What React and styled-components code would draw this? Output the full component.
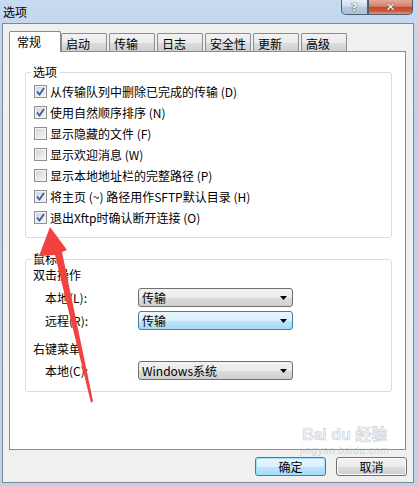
import React from 'react';
import styled, { createGlobalStyle } from 'styled-components';

const cjk = `"Noto Sans CJK SC", "Liberation Sans", sans-serif`;

const GlobalStyle = createGlobalStyle`
  html, body {
    margin: 0;
    padding: 0;
  }
  body {
    background: #b9d1ea;
    font-family: ${cjk};
    font-size: 12px;
    color: #000;
  }
`;

const Window = styled.div`
  position: relative;
  width: 418px;
  height: 486px;
  overflow: hidden;
  display: flex;
  flex-direction: column;
  box-sizing: border-box;
  background: linear-gradient(180deg, #c6daf0 0%, #b9d1ea 25%, #bcd3ec 100%);
`;

const TitleBar = styled.div`
  flex: none;
  height: 23px;
  display: flex;
  justify-content: space-between;
  align-items: flex-start;
  padding: 0 5px 0 3px;
`;

const Title = styled.div`
  margin-top: 4px;
  font-size: 12px;
  line-height: 16px;
`;

const Caption = styled.div`
  display: flex;
`;

const CaptionButton = styled.div`
  width: ${({ $w }) => $w}px;
  height: 15px;
  box-sizing: border-box;
  border: 1px solid #4f5d70;
  border-top: none;
  border-radius: ${({ $close }) => ($close ? '0 0 5px 0' : '0 0 0 5px')};
  display: flex;
  align-items: center;
  justify-content: center;
  background: ${({ $close }) => ($close
    ? 'linear-gradient(180deg, #e9a899 0%, #d9806b 45%, #c24a2e 52%, #cc5b3f 80%, #e3987c 100%)'
    : 'linear-gradient(180deg, #e6eef8 0%, #cfdcec 45%, #b5c8df 52%, #adc3dc 100%)')};
  color: #fff;
  font: bold ${({ $close }) => ($close ? 12 : 11)}px "DejaVu Sans", sans-serif;
  line-height: 13px;
  text-shadow: 0 0 1px #333, 0 0 1px #333;
`;

const Client = styled.div`
  flex: 1;
  display: flex;
  flex-direction: column;
  margin: 0 4px 3px 2px;
  padding: 7px 7px 0 6px;
  background: #f0f0f0;
  border: 1px solid #7f8896;
`;

const TabRow = styled.div`
  display: flex;
  align-items: flex-end;
  gap: 2px;
  height: 20px;
  position: relative;
  z-index: 1;
`;

const Tab = styled.div`
  box-sizing: border-box;
  width: ${({ $active }) => ($active ? 52 : 46)}px;
  height: ${({ $active }) => ($active ? 21 : 18)}px;
  margin-bottom: ${({ $active }) => ($active ? -1 : 0)}px;
  margin-right: ${({ $active }) => ($active ? -2 : 0)}px;
  padding: ${({ $active }) => ($active ? '1px 0 0 7px' : '2px 0 0 4px')};
  line-height: ${({ $active }) => ($active ? 18 : 15)}px;
  border: 1px solid #898c95;
  border-bottom: none;
  border-radius: 2px 2px 0 0;
  background: ${({ $active }) => ($active
    ? '#fff'
    : 'linear-gradient(180deg, #f2f2f2 0%, #ebebeb 50%, #dddddd 51%, #cfcfcf 100%)')};
  white-space: nowrap;
`;

const Panel = styled.div`
  flex: none;
  box-sizing: border-box;
  height: 399px;
  background: #fff;
  border: 1px solid #898c95;
  padding: 0 13px 0 15px;
`;

const Group = styled.fieldset`
  margin: ${({ $top }) => $top}px 0 0;
  padding: 0 0 ${({ $bottom }) => $bottom}px ${({ $left }) => $left}px;
  border: 1px solid #d5dfe5;
  border-radius: 3px;
  min-width: 0;
`;

const Legend = styled.legend`
  margin-left: ${({ $shift }) => $shift}px;
  padding: 0 2px;
  line-height: 14px;
  font-size: 12px;
`;

const Rows = styled.div`
  padding-top: 2px;
`;

const CheckRow = styled.label`
  display: flex;
  align-items: center;
  gap: 3px;
  height: 21px;
  line-height: 16px;
  white-space: nowrap;
`;

const Box = styled.span`
  flex: none;
  width: 13px;
  height: 13px;
  box-sizing: border-box;
  border: 1px solid #8e8f8f;
  background: linear-gradient(135deg, #cdd1d7 0%, #e4e6e9 50%, #f7f7f7 100%);
  box-shadow: inset 0 0 0 1px #f4f4f4;
  display: flex;
  align-items: center;
  justify-content: center;
`;

const Heading = styled.div`
  margin-top: ${({ $top }) => $top}px;
  line-height: 16px;
`;

const FieldRow = styled.div`
  display: flex;
  align-items: center;
  margin-top: ${({ $top }) => $top}px;
  height: 19px;
`;

const FieldLabel = styled.span`
  box-sizing: border-box;
  width: 105px;
  padding-left: 12px;
  line-height: 16px;
`;

const Combo = styled.div`
  box-sizing: border-box;
  width: 155px;
  height: 19px;
  display: flex;
  align-items: center;
  justify-content: space-between;
  padding: 0 5px 0 3px;
  border: 1px solid ${({ $focus }) => ($focus ? '#3c7fb1' : '#707070')};
  border-radius: 3px;
  background: ${({ $focus }) => ($focus
    ? 'linear-gradient(180deg, #eaf6fd 0%, #d9f0fc 50%, #bee6fd 51%, #a7d9f5 100%)'
    : 'linear-gradient(180deg, #f2f2f2 0%, #ebebeb 50%, #dddddd 51%, #cfcfcf 100%)')};
  line-height: 16px;
`;

const Footer = styled.div`
  display: flex;
  justify-content: flex-end;
  gap: 10px;
  margin: 7px -1px 0 0;
`;

const Button = styled.button`
  box-sizing: border-box;
  width: 71px;
  height: 19px;
  padding: 0;
  font-family: ${cjk};
  font-size: 12px;
  line-height: 16px;
  color: #000;
  border: 1px solid ${({ $primary }) => ($primary ? '#3c7fb1' : '#707070')};
  border-radius: 3px;
  box-shadow: inset 0 0 0 1px ${({ $primary }) => ($primary ? '#9fe0fb' : '#fcfcfc')};
  background: ${({ $primary }) => ($primary
    ? 'linear-gradient(180deg, #eaf6fd 0%, #d9f0fc 50%, #bee6fd 51%, #a7d9f5 100%)'
    : 'linear-gradient(180deg, #f2f2f2 0%, #ebebeb 50%, #dddddd 51%, #cfcfcf 100%)')};
`;

const Overlay = styled.svg`
  position: absolute;
  left: 0;
  top: 0;
  pointer-events: none;
`;

const Watermark = styled.div`
  position: absolute;
  left: 300px;
  top: 425px;
  display: flex;
  flex-direction: column;
  align-items: center;
  color: rgba(236, 238, 242, 0.7);
  pointer-events: none;
`;

const MarkTitle = styled.div`
  font: bold 16px "Liberation Sans", ${cjk};
  line-height: 20px;
  -webkit-text-stroke: 0.7px rgba(170, 175, 185, 0.5);
  white-space: nowrap;
`;

const MarkUrl = styled.div`
  font: 10px "Liberation Sans", sans-serif;
  line-height: 11px;
  letter-spacing: 0.5px;
  color: rgba(180, 186, 196, 0.55);
`;

const Check = () => (
  <svg width="9" height="9" viewBox="0 0 9 9">
    <path d="M1 4.5 L3.5 7.5 L8 1" fill="none" stroke="#3c5a9e" strokeWidth="1.8" />
  </svg>
);

const Arrow = () => (
  <svg width="7" height="4" viewBox="0 0 7 4">
    <path d="M0 0 H7 L3.5 4 Z" fill="#000" />
  </svg>
);

const tabs = ['常规', '启动', '传输', '日志', '安全性', '更新', '高级'];

const options = [
  { text: '从传输队列中删除已完成的传输 (D)', checked: true },
  { text: '使用自然顺序排序 (N)', checked: true },
  { text: '显示隐藏的文件 (F)', checked: false },
  { text: '显示欢迎消息 (W)', checked: false },
  { text: '显示本地地址栏的完整路径 (P)', checked: false },
  { text: '将主页 (~) 路径用作SFTP默认目录 (H)', checked: true },
  { text: '退出Xftp时确认断开连接 (O)', checked: true },
];

export default function App() {
  return (
    <>
      <GlobalStyle />
      <Window>
        <TitleBar>
          <Title>选项</Title>
          <Caption>
            <CaptionButton $w={27}>?</CaptionButton>
            <CaptionButton $w={45} $close>✕</CaptionButton>
          </Caption>
        </TitleBar>
        <Client>
          <TabRow>
            {tabs.map((t, i) => (
              <Tab key={t} $active={i === 0}>{t}</Tab>
            ))}
          </TabRow>
          <Panel>
            <Group $top={13} $bottom={9} $left={8}>
              <Legend $shift={-3}>选项</Legend>
              <Rows>
                {options.map((o) => (
                  <CheckRow key={o.text}>
                    <Box>{o.checked && <Check />}</Box>
                    {o.text}
                  </CheckRow>
                ))}
              </Rows>
            </Group>
            <Group $top={14} $bottom={11} $left={7}>
              <Legend $shift={-2}>鼠标</Legend>
              <Heading $top={1}>双击操作</Heading>
              <FieldRow $top={5}>
                <FieldLabel>本地(L):</FieldLabel>
                <Combo>传输<Arrow /></Combo>
              </FieldRow>
              <FieldRow $top={4}>
                <FieldLabel>远程(R):</FieldLabel>
                <Combo $focus>传输<Arrow /></Combo>
              </FieldRow>
              <Heading $top={11}>右键菜单</Heading>
              <FieldRow $top={4}>
                <FieldLabel>本地(C):</FieldLabel>
                <Combo>Windows系统<Arrow /></Combo>
              </FieldRow>
            </Group>
          </Panel>
          <Footer>
            <Button $primary>确定</Button>
            <Button>取消</Button>
          </Footer>
        </Client>
        <Watermark>
          <MarkTitle>Bai du 经验</MarkTitle>
          <MarkUrl>jingyan.baidu.com</MarkUrl>
        </Watermark>
        <Overlay width="418" height="486" viewBox="0 0 418 486">
          <polygon
            points="50,227 67,250 62,252 93,401 91,403 55,255 39,256"
            fill="#f2413e"
          />
        </Overlay>
      </Window>
    </>
  );
}
